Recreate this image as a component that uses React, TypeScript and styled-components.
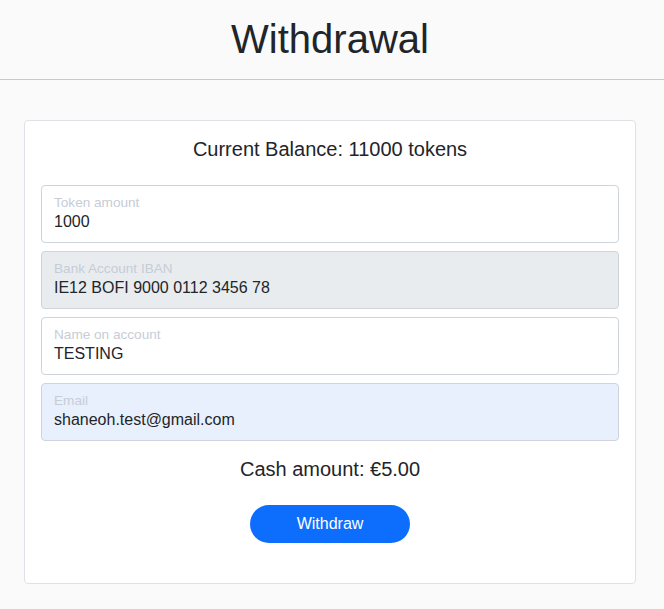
import React from "react";
import styled, { createGlobalStyle } from "styled-components";

const Global = createGlobalStyle`
  html, body { margin: 0; padding: 0; background: #fafafa; }
  body { font-family: "Liberation Sans", Arial, sans-serif; color: #212529; }
  * { box-sizing: border-box; }
`;

const Header = styled.header`
  height: 80px;
  border-bottom: 1px solid #c8c8c8;
  display: flex;
  align-items: center;
  justify-content: center;
  padding-right: 4px;
`;

const Title = styled.h1`
  margin: 0;
  font-size: 40px;
  font-weight: 400;
  line-height: 1;
  color: #212529;
  transform: translateY(-1px);
`;

const Main = styled.main`
  padding: 40px 28px 0 24px;
`;

const Card = styled.section`
  background: #fff;
  border: 1px solid #dee2e6;
  border-radius: 4px;
  padding: 16px 16px 40px;
  display: flex;
  flex-direction: column;
  align-items: stretch;
`;

const Heading = styled.div`
  font-size: 20px;
  line-height: 24px;
  text-align: center;
  color: #212529;
`;

const Fields = styled.div`
  display: flex;
  flex-direction: column;
  gap: 8px;
  margin: 24px 0 16px;
`;

const Field = styled.div<{ $bg?: string }>`
  height: 58px;
  border: 1px solid #ced4da;
  border-radius: 4px;
  background: ${(p) => p.$bg ?? "#fff"};
  padding: 9px 12px 0;
  display: flex;
  flex-direction: column;
`;

const Label = styled.span`
  font-size: 13.6px;
  line-height: 16px;
  color: #c6cdd6;
`;

const Value = styled.span`
  margin-top: 1px;
  font-size: 16px;
  line-height: 20px;
  color: #212529;
`;

const Cash = styled.div`
  font-size: 20px;
  line-height: 24px;
  text-align: center;
  color: #212529;
`;

const Button = styled.button`
  align-self: center;
  margin-top: 24px;
  width: 160px;
  height: 38px;
  border: none;
  border-radius: 19px;
  background: #0d6efd;
  color: #fff;
  font-family: "Liberation Sans", Arial, sans-serif;
  font-size: 16px;
  cursor: pointer;
`;

const fields = [
  { label: "Token amount", value: "1000" },
  { label: "Bank Account IBAN", value: "IE12 BOFI 9000 0112 3456 78", bg: "#e9ecef" },
  { label: "Name on account", value: "TESTING" },
  { label: "Email", value: "shaneoh.test@gmail.com", bg: "#e8f0fe" },
];

export default function App() {
  return (
    <>
      <Global />
      <Header>
        <Title>Withdrawal</Title>
      </Header>
      <Main>
        <Card>
          <Heading>Current Balance: 11000 tokens</Heading>
          <Fields>
            {fields.map((f) => (
              <Field key={f.label} $bg={f.bg}>
                <Label>{f.label}</Label>
                <Value>{f.value}</Value>
              </Field>
            ))}
          </Fields>
          <Cash>Cash amount: €5.00</Cash>
          <Button>Withdraw</Button>
        </Card>
      </Main>
    </>
  );
}
